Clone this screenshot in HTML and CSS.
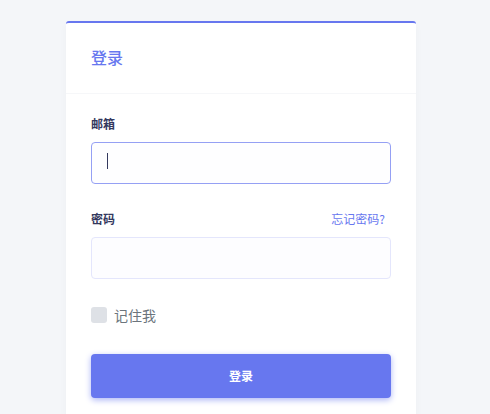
FILE: index.html
```html
<!DOCTYPE html>
<html lang="zh">
<head>
<meta charset="utf-8">
<title>登录</title>
<link rel="stylesheet" href="styles.css">
</head>
<body>
<div class="page">
  <div class="card">
    <div class="card-header"><h4 class="card-title">登录</h4></div>
    <form class="card-body">
      <div class="form-group">
        <label class="label" for="email">邮箱</label>
        <div class="input-wrap caret">
          <input class="form-control focused" id="email" type="email">
        </div>
      </div>
      <div class="form-group">
        <div class="label-row">
          <label class="label" for="password">密码</label>
          <a class="forgot" href="#">忘记密码?</a>
        </div>
        <div class="input-wrap">
          <input class="form-control" id="password" type="password">
        </div>
      </div>
      <div class="form-group check-row">
        <span class="checkbox"></span>
        <span class="check-label">记住我</span>
      </div>
      <button class="btn" type="button">登录</button>
    </form>
  </div>
</div>
</body>
</html>
```
FILE: styles.css
```css
* { box-sizing: border-box; }
html, body { margin: 0; padding: 0; }
body {
  background: #f4f6f9;
  font-family: "Noto Sans CJK SC", "Noto Sans", sans-serif;
  height: 414px;
  overflow: hidden;
}
.page {
  padding: 21px 0 0 66px;
}
.card {
  width: 350px;
  background: #fff;
  border-top: 2px solid #6777ef;
  border-radius: 3px 3px 0 0;
  box-shadow: 0 4px 8px rgba(0,0,0,.03);
  height: 393px;
}
.card-header {
  height: 71px;
  padding: 0 25px 3px;
  display: flex;
  align-items: center;
  border-bottom: 1px solid #f6f7f9;
}
.card-title {
  margin: 0;
  font-size: 16px;
  font-weight: 500;
  color: #6777ef;
  line-height: 28px;
}
.card-body {
  padding: 20px 25px;
  display: flex;
  flex-direction: column;
}
.form-group {
  margin-bottom: 25px;
}
.label {
  display: block;
  font-size: 12px;
  font-weight: 700;
  color: #34395e;
  line-height: 20px;
  margin-bottom: 8px;
}
.label-row {
  display: flex;
  justify-content: space-between;
  align-items: flex-start;
}
.forgot {
  font-size: 12px;
  line-height: 20px;
  color: #6777ef;
  text-decoration: none;
  padding-right: 6px;
}
.input-wrap {
  position: relative;
}
.caret::after {
  content: "";
  position: absolute;
  left: 16px;
  top: 11px;
  width: 1px;
  height: 16px;
  background: #34395e;
}
.form-control {
  display: block;
  width: 300px;
  height: 42px;
  border: 1px solid #e4e6fc;
  background: #fdfdff;
  border-radius: 4px;
  padding: 0 15px;
  font-size: 14px;
  outline: none;
}
.form-control.focused {
  border-color: #95a0f4;
  background: #fefeff;
}
.check-row {
  display: flex;
  align-items: center;
  height: 22px;
  margin-bottom: 28px;
}
.checkbox {
  width: 16px;
  height: 16px;
  border-radius: 3px;
  background: #dee1e6;
  margin-right: 7px;
}
.check-label {
  font-size: 14px;
  color: #6c757d;
  line-height: 22px;
}
.btn {
  width: 300px;
  height: 44px;
  border: none;
  border-radius: 4px;
  background: #6777ef;
  color: #fff;
  font-family: inherit;
  font-size: 12px;
  font-weight: 700;
  padding-bottom: 2px;
  box-shadow: 0 2px 6px #acb5f6;
}
```
